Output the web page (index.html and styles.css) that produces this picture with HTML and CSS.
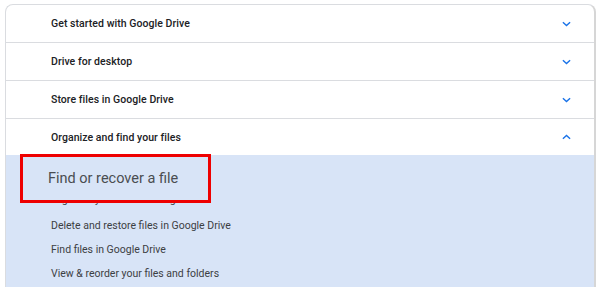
FILE: index.html
```html
<!DOCTYPE html>
<html>
<head>
<meta charset="utf-8">
<link rel="stylesheet" href="styles.css">
</head>
<body>
<div class="card">
  <div class="row"><span class="title">Get started with Google Drive</span>
    <svg class="chev" viewBox="0 0 10 6" width="9" height="6"><path d="M1 1 L5 4.6 L9 1" fill="none" stroke="#1a73e8" stroke-width="1.6"/></svg></div>
  <div class="row"><span class="title">Drive for desktop</span>
    <svg class="chev" viewBox="0 0 10 6" width="9" height="6"><path d="M1 1 L5 4.6 L9 1" fill="none" stroke="#1a73e8" stroke-width="1.6"/></svg></div>
  <div class="row"><span class="title">Store files in Google Drive</span>
    <svg class="chev" viewBox="0 0 10 6" width="9" height="6"><path d="M1 1 L5 4.6 L9 1" fill="none" stroke="#1a73e8" stroke-width="1.6"/></svg></div>
  <div class="row open"><span class="title">Organize and find your files</span>
    <svg class="chev" viewBox="0 0 10 6" width="9" height="6"><path d="M1 5 L5 1.4 L9 5" fill="none" stroke="#1a73e8" stroke-width="1.6"/></svg></div>
  <div class="panel">
    <a class="link first">Organize your files in Google Drive</a>
    <a class="link">Delete and restore files in Google Drive</a>
    <a class="link">Find files in Google Drive</a>
    <a class="link">View &amp; reorder your files and folders</a>
  </div>
  <div class="callout">Find or recover a file</div>
</div>
</body>
</html>
```

FILE: styles.css
```css
html, body {
  margin: 0;
  padding: 0;
  background: #fff;
  font-family: Roboto, "Noto Sans", Arial, sans-serif;
  overflow: hidden;
}
.card {
  position: relative;
  margin: 4px 5px 0 5px;
  width: 588px;
  height: 282px;
  border: 1px solid #dadce0;
  border-right: 2px solid #d6d6d6;
  border-bottom: none;
  border-radius: 8px 8px 0 0;
  overflow: hidden;
  display: flex;
  flex-direction: column;
}
.row {
  display: flex;
  align-items: center;
  justify-content: space-between;
  height: 37px;
  flex: none;
  padding: 0 23px 0 45px;
  border-bottom: 1px solid #dadce0;
}
.row.open {
  border-bottom: none;
  height: 36px;
}
.title {
  font-size: 10.5px;
  font-weight: 500;
  color: #202124;
  letter-spacing: 0.05px;
}
.chev {
  display: block;
}
.panel {
  background: #d8e4f7;
  display: flex;
  flex-direction: column;
  padding: 33px 0 0 45px;
  flex: 1;
}
.link {
  display: block;
  font-size: 10.5px;
  line-height: 24px;
  color: #3c4043;
}
.link.first {
  margin-bottom: 2px;
}
.callout {
  position: absolute;
  left: 14px;
  top: 149px;
  box-sizing: border-box;
  width: 191px;
  height: 49px;
  border: 3px solid #ee0000;
  background: #d8e4f7;
  display: flex;
  align-items: center;
  padding-left: 25px;
  font-size: 14.5px;
  color: #4a4d51;
}
```
